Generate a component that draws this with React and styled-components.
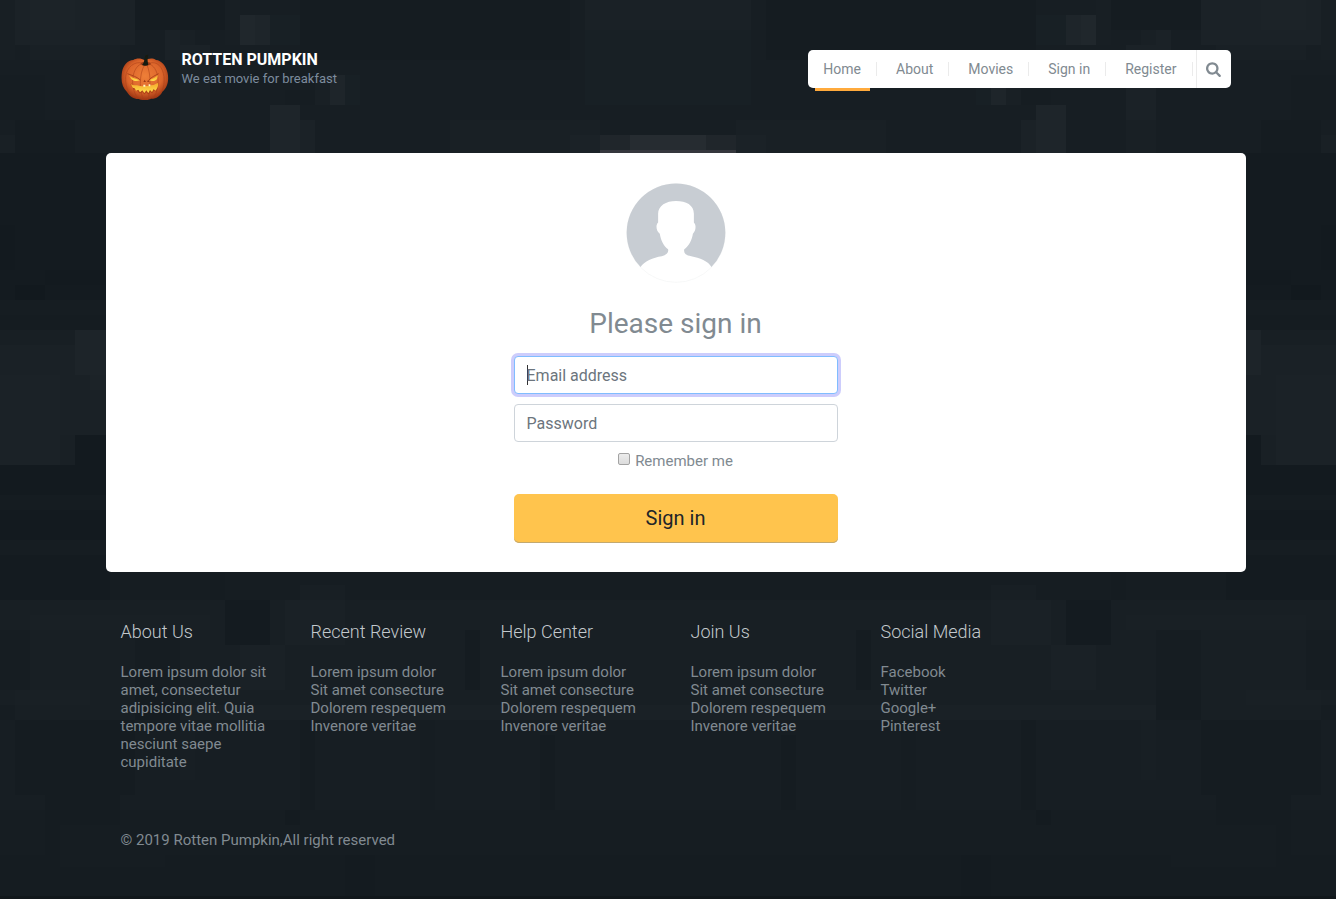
import React from "react";
import styled, { createGlobalStyle } from "styled-components";

const GlobalStyle = createGlobalStyle`
  *, *::before, *::after { box-sizing: border-box; }
  body {
    margin: 0;
    background: #161d22;
    color: #818a91;
    font-family: Roboto, "Liberation Sans", sans-serif;
    font-size: 15px;
    line-height: 18px;
  }
  a { color: inherit; text-decoration: none; }
`;

const Page = styled.div`
  position: relative;
  min-height: 100vh;
  padding: 50px 0 50px 15px;
  overflow: hidden;
`;

const Backdrop = styled.svg`
  position: absolute;
  inset: 0;
  width: 100%;
  height: 100%;
`;

const Container = styled.div`
  position: relative;
  max-width: 1140px;
  margin: 0 auto;
`;

const Header = styled.header`
  display: flex;
  justify-content: space-between;
  align-items: flex-start;
  padding: 0 15px;
  margin-bottom: 53px;
`;

const Brand = styled.a`
  display: flex;
  gap: 11px;
`;

const Logo = styled.svg`
  width: 50px;
  height: 50px;
`;

const BrandName = styled.h1`
  margin: 0;
  color: #fff;
  font-size: 16px;
  font-weight: 700;
  line-height: 19px;
`;

const Tagline = styled.small`
  display: block;
  color: #7d8c9e;
  font-size: 13px;
  line-height: 19px;
`;

const Nav = styled.nav`
  display: flex;
  height: 38px;
  background: #fff;
  border-radius: 5px;
  font-size: 14px;
`;

const Menu = styled.ul`
  display: flex;
  align-items: center;
  gap: 4px;
  margin: 0 3px 0 0;
  padding: 0;
  list-style: none;
`;

const MenuItem = styled.li`
  position: relative;
  display: flex;
  align-items: center;
  height: 38px;
  &::before {
    content: "";
    display: ${(p) => (p.$current ? "block" : "none")};
    position: absolute;
    top: 100%;
    left: 10%;
    width: 80%;
    height: 3px;
    background: #ffaa3c;
  }
`;

const MenuLink = styled.a`
  padding: 0 15px;
  border-right: 1px solid #ebebeb;
  line-height: 14px;
`;

const SearchButton = styled.button`
  display: flex;
  align-items: center;
  justify-content: center;
  width: 35px;
  padding: 0;
  border: 0;
  border-left: 1px solid #ebebeb;
  background: transparent;
  color: #818a91;
`;

const Card = styled.main`
  padding: 30px 15px 29px;
  background: #fff;
  border-radius: 5px;
`;

const Form = styled.form`
  display: flex;
  flex-direction: column;
  max-width: 324px;
  margin: 0 auto;
`;

const Avatar = styled.svg`
  align-self: center;
  width: 100px;
  height: 100px;
  margin-bottom: 24px;
`;

const Title = styled.h2`
  margin: 0 0 15px;
  font-size: 28px;
  font-weight: 400;
  line-height: 34px;
  text-align: center;
`;

const Field = styled.input`
  height: 38px;
  margin-bottom: 10px;
  padding: 0 12px;
  border: 1px solid ${(p) => (p.$active ? "#80bdff" : "#ced4da")};
  border-radius: 4px;
  outline: 0;
  background: ${(p) =>
    p.$active
      ? "linear-gradient(#333, #333) 12px center / 1px 20px no-repeat #fff"
      : "#fff"};
  box-shadow: ${(p) => (p.$active ? "0 0 0 3px #cdcdfc" : "none")};
  caret-color: ${(p) => (p.$active ? "transparent" : "auto")};
  color: #495057;
  font: 16px/24px Roboto, "Liberation Sans", sans-serif;
  &::placeholder { color: #6c757d; opacity: 1; }
  &:not(:placeholder-shown) { background: #fff; caret-color: auto; }
`;

const Remember = styled.label`
  display: flex;
  justify-content: center;
  gap: 5px;
  margin-bottom: 24px;
`;

const Checkbox = styled.input`
  appearance: none;
  width: 12px;
  height: 12px;
  margin: 1px 0 0;
  border: 1px solid #a3a3a3;
  border-radius: 2px;
  background: linear-gradient(#ececec, #dcdcdc);
  &:checked { background: #818a91; }
`;

const Submit = styled.button`
  height: 49px;
  padding: 0 0 2px;
  border: 0;
  border-radius: 5px;
  background: #ffc44d;
  box-shadow: inset 0 -1px 0 #c3a96f;
  color: #212529;
  font: 20px/30px Roboto, "Liberation Sans", sans-serif;
`;

const Footer = styled.footer`
  padding: 50px 15px 0;
`;

const Columns = styled.div`
  display: grid;
  grid-template-columns: repeat(6, 1fr);
  gap: 30px;
  margin-bottom: 60px;
`;

const ColumnTitle = styled.h3`
  margin: 0 0 21px;
  color: #c3c9cd;
  font-size: 18px;
  font-weight: 300;
  line-height: 20px;
`;

const Text = styled.p`
  margin: 0;
`;

const LinkList = styled.ul`
  margin: 0;
  padding: 0;
  list-style: none;
  white-space: nowrap;
`;

/* Left half of the mosaic: x, y, width, height, colour. The right half mirrors it. */
const tiles = [
  [0, 0, 668, 153, "#171e23"],
  [0, 0, 15, 60, "#181f24"],
  [15, 0, 120, 45, "#1b2227"],
  [30, 0, 45, 30, "#1c2328"],
  [30, 45, 90, 15, "#192025"],
  [0, 75, 45, 45, "#161d22"],
  [15, 120, 60, 33, "#151c21"],
  [135, 0, 90, 30, "#151c21"],
  [165, 30, 15, 30, "#1b2227"],
  [180, 30, 15, 15, "#192025"],
  [180, 45, 30, 75, "#1b2227"],
  [180, 120, 30, 33, "#192025"],
  [225, 0, 15, 45, "#181f24"],
  [240, 15, 15, 30, "#20272c"],
  [255, 15, 15, 30, "#1e252a"],
  [270, 15, 30, 30, "#182025"],
  [300, 0, 270, 60, "#151c21"],
  [285, 90, 30, 15, "#161d22"],
  [270, 105, 30, 48, "#1e252a"],
  [300, 120, 15, 33, "#1b2227"],
  [315, 75, 15, 30, "#192025"],
  [330, 75, 15, 30, "#1e252a"],
  [345, 75, 15, 30, "#182025"],
  [450, 120, 150, 33, "#192025"],
  [585, 0, 83, 30, "#1a2126"],
  [585, 30, 83, 75, "#182025"],
  [570, 135, 30, 18, "#1b2227"],
  [600, 135, 30, 15, "#20262b"],
  [630, 135, 38, 15, "#262c31"],
  [600, 150, 68, 3, "#35373d"],
  [0, 135, 15, 30, "#192025"],
  [0, 153, 110, 147, "#141b20"],
  [0, 225, 15, 45, "#131a1f"],
  [45, 270, 60, 15, "#131a1f"],
  [15, 285, 30, 15, "#12191e"],
  [0, 300, 110, 15, "#161d22"],
  [0, 315, 110, 15, "#151c21"],
  [0, 330, 110, 15, "#181f24"],
  [0, 345, 110, 90, "#1a2126"],
  [0, 375, 60, 90, "#1b2227"],
  [75, 330, 35, 45, "#1d2429"],
  [90, 375, 20, 15, "#1c2328"],
  [60, 435, 15, 30, "#192025"],
  [75, 435, 35, 30, "#131a1f"],
  [0, 465, 110, 75, "#131a1f"],
  [0, 495, 110, 15, "#151c21"],
  [0, 540, 110, 15, "#161d22"],
  [0, 555, 110, 45, "#141b20"],
  [110, 570, 558, 30, "#161d22"],
  [210, 573, 15, 42, "#151c21"],
  [0, 600, 668, 120, "#181f24"],
  [225, 600, 45, 45, "#141b20"],
  [285, 600, 60, 45, "#1a2126"],
  [300, 585, 45, 15, "#181f24"],
  [240, 645, 45, 45, "#1a2126"],
  [30, 615, 180, 15, "#192025"],
  [135, 630, 45, 60, "#161d22"],
  [0, 630, 30, 60, "#161d22"],
  [465, 630, 15, 60, "#151c21"],
  [15, 690, 75, 15, "#192025"],
  [0, 705, 15, 15, "#161d22"],
  [135, 690, 45, 30, "#151c21"],
  [180, 705, 488, 15, "#1a2126"],
  [0, 720, 668, 90, "#171e23"],
  [15, 720, 120, 75, "#151c21"],
  [300, 720, 15, 90, "#151c21"],
  [420, 720, 15, 90, "#161d22"],
  [540, 735, 15, 75, "#151c21"],
  [180, 720, 15, 60, "#181f24"],
  [0, 810, 668, 45, "#161d22"],
  [285, 810, 15, 15, "#141b20"],
  [45, 795, 75, 60, "#151c21"],
  [0, 855, 668, 44, "#151c21"],
  [60, 825, 105, 42, "#161d22"],
  [345, 855, 30, 44, "#141b20"],
];

function Mosaic() {
  return (
    <Backdrop viewBox="0 0 1336 899" preserveAspectRatio="xMidYMin slice" shapeRendering="crispEdges" aria-hidden="true">
      <defs>
        <g id="half">
          {tiles.map(([x, y, w, h, fill]) => (
            <rect key={`${x}-${y}-${w}`} x={x} y={y} width={w} height={h} fill={fill} />
          ))}
        </g>
      </defs>
      <use href="#half" />
      <use href="#half" transform="translate(1336 0) scale(-1 1)" />
      <rect y="896" width="1336" height="3" fill="#11171b" />
    </Backdrop>
  );
}

function Pumpkin() {
  return (
    <Logo viewBox="63 30 150 150" aria-hidden="true">
      <defs>
        <radialGradient id="skin" cx="50%" cy="42%" r="58%">
          <stop offset="0" stopColor="#ee7f38" />
          <stop offset="0.65" stopColor="#dc652b" />
          <stop offset="1" stopColor="#9c3412" />
        </radialGradient>
        <linearGradient id="glow" x1="0" y1="0" x2="0" y2="1">
          <stop offset="0" stopColor="#f4a52c" />
          <stop offset="1" stopColor="#ffe04c" />
        </linearGradient>
      </defs>
      <path fill="url(#skin)" d="M134 61C122 53 108 55 100 60C83 60 70 76 66 96C62 121 66 142 81 156C89 170 104 178 116 177C127 182 145 181 153 176C168 177 181 168 187 155C203 143 207 121 203 100C199 78 184 61 168 60C158 53 145 55 134 61Z" />
      <g fill="none" stroke="#a83e18" strokeWidth="3" opacity="0.5">
        <path d="M130 70C104 61 80 82 77 110C75 133 83 154 92 166" />
        <path d="M132 71C113 70 101 91 98 116C96 142 104 165 116 176" />
        <path d="M135 73C125 87 121 109 121 130C121 151 125 169 132 178" />
        <path d="M140 73C147 87 151 109 150 130C150 151 147 169 143 178" />
        <path d="M144 71C161 74 172 93 174 116C176 142 169 165 158 175" />
        <path d="M147 70C171 61 189 82 192 110C194 133 189 151 180 164" />
      </g>
      <path fill="#8a3213" opacity="0.8" d="M121 72C124 64 149 63 153 72C145 78 129 78 121 72Z" />
      <path fill="#171b10" d="M126 75C134 68 132 57 137 46L145 44C141 55 143 65 145 75C139 78 132 78 126 75Z" />
      <path fill="none" stroke="#9a3611" strokeWidth="3" opacity="0.7" d="M82 101C96 106 112 111 121 120M176 101C166 106 153 112 147 120" />
      <path fill="url(#glow)" d="M86 105C94 113 107 115 119 121C110 125 99 123 94 117ZM174 105C167 112 157 116 148 121C157 125 167 123 171 117Z" />
      <path fill="#8c2c0f" opacity="0.8" d="M130 126L134 119L138 126ZM141 125L145 119L148 126Z" />
      <path fill="none" stroke="#a23a14" strokeWidth="5" strokeLinejoin="round" opacity="0.7" d="M93 132L103 146L114 151L120 158L128 153L133 160L139 153L145 160L150 152L156 157L162 148L167 152L175 129" />
      <path fill="url(#glow)" d="M92 132C99 137 105 135 111 136L117 137L126 139L136 138L144 138L153 136L161 135L168 131L175 128C176 138 171 146 166 152L161 147L156 156L150 150L145 159L139 151L133 159L127 151L120 157L115 149L108 152L104 145L98 143Z" />
      <path fill="#fff5c0" d="M130 134H136V140H130ZM146 133H151V139H146Z" />
    </Logo>
  );
}

function UserAvatar() {
  return (
    <Avatar viewBox="77 38 302 302" role="img" aria-label="User">
      <circle cx="228" cy="189" r="149" fill="#fff" stroke="#f3f4f5" strokeWidth="2" />
      <path
        fill="#c8cdd3"
        d="M121 292A149 149 0 1 1 335 292C326 273 299 264 274 259C259 257 250 250 253 238C267 229 277 207 279 191C288 184 290 164 282 157V131C282 104 259 92 228 92C198 92 174 106 174 131V157C166 164 168 184 179 191C182 210 191 229 204 238C207 248 199 256 185 259C159 263 131 274 121 292Z"
      />
    </Avatar>
  );
}

function SearchIcon() {
  return (
    <svg width="16" height="16" viewBox="0 0 1792 1792" fill="currentColor" aria-hidden="true">
      <path d="M1152 832q0-185-131.5-316.5t-316.5-131.5-316.5 131.5-131.5 316.5 131.5 316.5 316.5 131.5 316.5-131.5 131.5-316.5zm512 832q0 52-38 90t-90 38q-54 0-90-38l-343-342q-179 124-399 124-143 0-273.5-55.5t-225-150-150-225-55.5-273.5 55.5-273.5 150-225 225-150 273.5-55.5 273.5 55.5 225 150 150 225 55.5 273.5q0 220-124 399l343 343q37 37 37 90z" />
    </svg>
  );
}

const menu = ["Home", "About", "Movies", "Sign in", "Register"];
const loremLinks = ["Lorem ipsum dolor", "Sit amet consecture", "Dolorem respequem", "Invenore veritae"];
const linkColumns = [
  { title: "Recent Review", links: loremLinks },
  { title: "Help Center", links: loremLinks },
  { title: "Join Us", links: loremLinks },
  { title: "Social Media", links: ["Facebook", "Twitter", "Google+", "Pinterest"] },
];

export default function App() {
  return (
    <Page>
      <GlobalStyle />
      <Mosaic />
      <Container>
        <Header>
          <Brand href="#">
            <Pumpkin />
            <div>
              <BrandName>ROTTEN PUMPKIN</BrandName>
              <Tagline>We eat movie for breakfast</Tagline>
            </div>
          </Brand>
          <Nav>
            <Menu>
              {menu.map((name, i) => (
                <MenuItem key={name} $current={i === 0}>
                  <MenuLink href="#">{name}</MenuLink>
                </MenuItem>
              ))}
            </Menu>
            <SearchButton type="button" aria-label="Search">
              <SearchIcon />
            </SearchButton>
          </Nav>
        </Header>

        <Card>
          <Form onSubmit={(e) => e.preventDefault()}>
            <UserAvatar />
            <Title>Please sign in</Title>
            <Field $active type="email" placeholder="Email address" aria-label="Email address" autoFocus />
            <Field type="password" placeholder="Password" aria-label="Password" />
            <Remember>
              <Checkbox type="checkbox" />
              Remember me
            </Remember>
            <Submit type="submit">Sign in</Submit>
          </Form>
        </Card>

        <Footer>
          <Columns>
            <section>
              <ColumnTitle>About Us</ColumnTitle>
              <Text>
                Lorem ipsum dolor sit amet, consectetur adipisicing elit. Quia tempore vitae mollitia nesciunt saepe
                cupiditate
              </Text>
            </section>
            {linkColumns.map(({ title, links }) => (
              <section key={title}>
                <ColumnTitle>{title}</ColumnTitle>
                <LinkList>
                  {links.map((link) => (
                    <li key={link}>
                      <a href="#">{link}</a>
                    </li>
                  ))}
                </LinkList>
              </section>
            ))}
          </Columns>
          <Text>© 2019 Rotten Pumpkin,All right reserved</Text>
        </Footer>
      </Container>
    </Page>
  );
}
